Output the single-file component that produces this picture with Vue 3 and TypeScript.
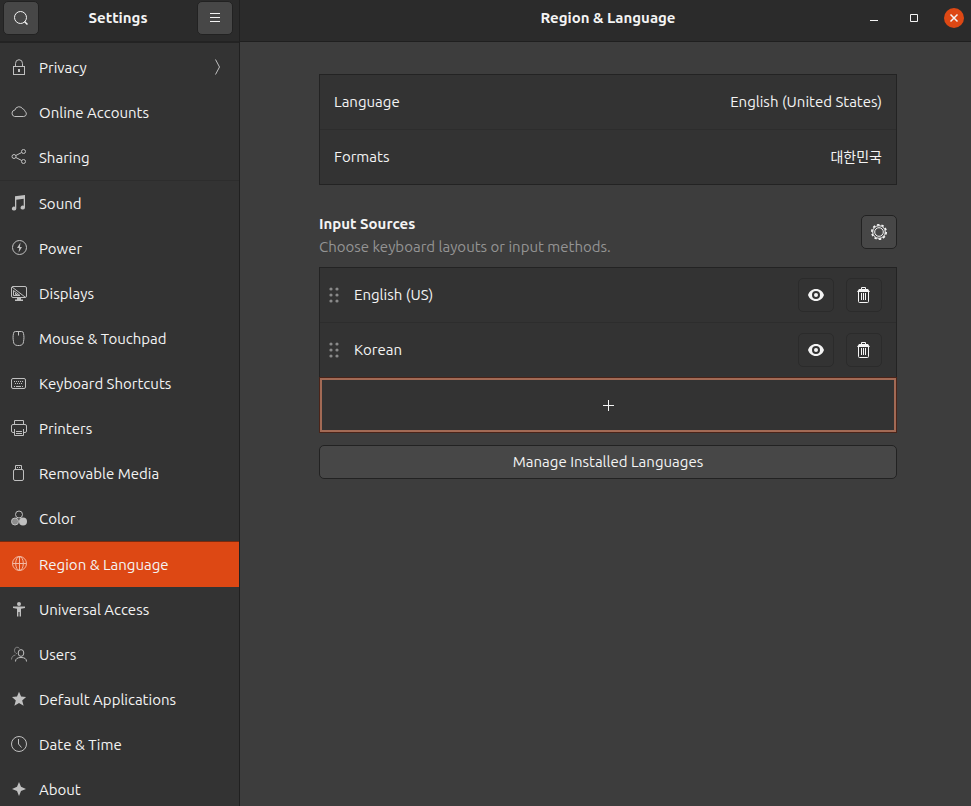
<script setup lang="ts">
import { ref } from 'vue'

interface Panel {
  label: string
  icon: string
  arrow?: boolean
  groupStart?: boolean
}

const panels: Panel[] = [
  {
    label: 'Privacy',
    arrow: true,
    icon: '<rect x="2.5" y="7.5" width="11" height="8"/><path d="M4.5 7.5V4.6a3.5 3.9 0 0 1 7 0v2.9"/><rect class="solid" x="7" y="10" width="2" height="3"/>',
  },
  {
    label: 'Online Accounts',
    icon: '<path d="M3.6 12.5h9.1a2.8 2.8 0 0 0 .9-5.4c.3-1-.6-2-1.600-1.800A4.300 4.300 0 0 0 3.900 6A3.300 3.300 0 0 0 3.600 12.500z"/>',
  },
  {
    label: 'Sharing',
    icon: '<circle cx="3" cy="7.500" r="2"/><circle cx="12.500" cy="2.500" r="2"/><circle cx="12.500" cy="12.500" r="2"/><path d="M4.800 6.500L10.700 3.500M4.800 8.500L10.700 11.500"/>',
  },
  {
    label: 'Sound',
    groupStart: true,
    icon: '<path class="solid" d="M4 1.200L14 0v12.500a2.200 2 0 1 1-1.300-1.800V3.800L5.300 4.700v8.800a2.200 2 0 1 1-1.300-1.800z"/>',
  },
  {
    label: 'Power',
    icon: '<circle cx="8.500" cy="7.500" r="7"/><path class="solid" d="M9.500 2.500L6 8h2.200L7.600 12.500L11 7H8.900z"/>',
  },
  {
    label: 'Displays',
    icon: '<rect x=".5" y="1.500" width="15" height="11" rx="1.500"/><path d="M1 2l13 10M2.500 5.500v5h6.500zM4.500 8v1.500h2"/><path class="solid" d="M6 13h4v1.500h2V16H4v-1.500h2z"/>',
  },
  {
    label: 'Mouse & Touchpad',
    icon: '<path d="M4.500 1.500h6a2 2 0 0 1 2 2c.6 3 .6 5 0 8a4.500 4 0 0 1-4 4h-2a4.500 4 0 0 1-4-4c-.6-3-.6-5 0-8a2 2 0 0 1 2-2zM7.500 1.500v4"/>',
  },
  {
    label: 'Keyboard Shortcuts',
    icon: '<rect x=".5" y="3.500" width="14" height="10" rx="1.500"/><path stroke-dasharray="1 1" d="M3 6.500h10M4 8.500h8"/><path d="M3 11.500h1M5 11.500h5M11 11.500h1"/>',
  },
  {
    label: 'Printers',
    icon: '<path d="M3.500 4V.5h9V4M3 12.500H2A1.500 1.500 0 0 1 .5 11V6A1.500 1.500 0 0 1 2 4.500h12A1.500 1.500 0 0 1 15.500 6v5a1.500 1.500 0 0 1-1.500 1.500h-1M3.500 9v6.500h9V9M5 11.500h6M5 13.500h6"/>',
  },
  {
    label: 'Removable Media',
    icon: '<rect x="2.500" y="4.500" width="10" height="11" rx="1.500"/><path d="M4.500 4V.5h6V4M6 2.500h1M8 2.500h1"/>',
  },
  {
    label: 'Color',
    icon: '<circle cx="8" cy="4.500" r="3.500"/><circle cx="4" cy="11.500" r="3.500" fill="#8d8d8d"/><circle class="solid" cx="12" cy="11.500" r="4"/>',
  },
  {
    label: 'Region & Language',
    groupStart: true,
    icon: '<circle cx="8.500" cy="7.500" r="7"/><ellipse cx="8.500" cy="7.500" rx="3.800" ry="7"/><path d="M1.500 7.500h14M8.500.5v14"/>',
  },
  {
    label: 'Universal Access',
    icon: '<circle class="solid" cx="8" cy="3" r="2"/><path class="solid" d="M2 5.500h12V7l-4 .8V15.500H8.600V11H7.400v4.500H6V7.800L2 7z"/>',
  },
  {
    label: 'Users',
    icon: '<g opacity=".55"><path d="M6 7.800C4.500 7.300 3.500 6 3.500 4.300a2.700 2.900 0 0 1 5-1.700M.5 13.500c0-2.500 1.500-4 4-4.500"/></g><ellipse cx="10" cy="7" rx="2.800" ry="3.400"/><path d="M4.500 15.500c0-2.800 2-4 5.500-4s5.500 1.200 5.500 4"/>',
  },
  {
    label: 'Default Applications',
    icon: '<path class="solid" d="M8 .8l2.100 4.800 5 .4-3.900 3.400 1.400 5.400L8 11.900l-4.600 2.900 1.400-5.400L1 6l5-.4z"/>',
  },
  {
    label: 'Date & Time',
    icon: '<circle cx="8" cy="8" r="7.500"/><path d="M7.500 3v5l3 3.500"/>',
  },
  {
    label: 'About',
    icon: '<path class="solid" d="M8 1l2 4.800L15 8l-5 2L8 15l-2-5L1 8l5-2.200z"/>',
  },
]

const selected = ref('Region & Language')
const sources = ref<string[]>(['English (US)', 'Korean'])
const locale = [
  { label: 'Language', value: 'English (United States)', lang: 'en' },
  { label: 'Formats', value: '대한민국', lang: 'ko' },
]

function remove(index: number) {
  sources.value.splice(index, 1)
}
</script>

<template>
  <div class="window">
    <aside class="sidebar">
      <header class="bar side-bar">
        <button class="btn tool" type="button" aria-label="Search">
          <svg class="icon bright" viewBox="0 0 16 16"><circle cx="7.500" cy="7.500" r="6" /><path d="M11.500 11.500L14.500 14.500" stroke-width="1.500" /></svg>
        </button>
        <h1 class="title">Settings</h1>
        <button class="btn tool" type="button" aria-label="Menu">
          <svg class="icon bright" viewBox="0 0 16 16"><path d="M3 3.500h10M3 7.500h10M3 11.500h10" /></svg>
        </button>
      </header>
      <nav class="nav">
        <a
          v-for="p in panels"
          :key="p.label"
          href="#"
          class="nav-item"
          :class="{ active: p.label === selected, group: p.groupStart }"
          @click.prevent="selected = p.label"
        >
          <svg class="icon" viewBox="0 0 16 16" v-html="p.icon"></svg>
          <span class="grow">{{ p.label }}</span>
          <svg v-if="p.arrow" class="icon" viewBox="0 0 16 16"><path d="M5.500 .5L9.500 8L5.500 15.500" /></svg>
        </a>
      </nav>
    </aside>

    <section class="content">
      <header class="bar main-bar">
        <h2 class="title">{{ selected }}</h2>
        <div class="controls">
          <button class="ctl" type="button" aria-label="Minimize">
            <svg class="icon bright" viewBox="0 0 16 16"><path d="M4 10.500h8" /></svg>
          </button>
          <button class="ctl" type="button" aria-label="Maximize">
            <svg class="icon bright" viewBox="0 0 16 16"><path d="M4.500 4.500h7v7h-7z" /></svg>
          </button>
          <button class="ctl close" type="button" aria-label="Close">
            <svg class="icon bright" viewBox="0 0 16 16"><path d="M4.500 4.500l7 7M11.500 4.500l-7 7" stroke-width="1.500" /></svg>
          </button>
        </div>
      </header>

      <main class="page">
        <div class="list">
          <button v-for="l in locale" :key="l.label" class="row locale" type="button">
            <span class="grow">{{ l.label }}</span>
            <span :lang="l.lang">{{ l.value }}</span>
          </button>
        </div>

        <div class="section-head">
          <div class="grow">
            <h3 class="heading">Input Sources</h3>
            <p class="hint">Choose keyboard layouts or input methods.</p>
          </div>
          <button class="btn square" type="button" aria-label="Input source options">
            <svg class="icon bright" viewBox="0 0 16 16"><circle cx="8" cy="8" r="7.200" stroke-width="1.600" stroke-dasharray="2.500 2.024" /><circle cx="8" cy="8" r="6.300" /><circle cx="8" cy="8" r="4.300" /></svg>
          </button>
        </div>

        <div class="list">
          <div v-for="(s, i) in sources" :key="s" class="row source">
            <svg class="grip" viewBox="0 0 10 16">
              <circle v-for="n in 6" :key="n" :cx="n % 2 ? 2 : 8" :cy="2 + 6 * Math.floor((n - 1) / 2)" r="1.600" />
            </svg>
            <span class="grow">{{ s }}</span>
            <button class="btn square flat" type="button" :aria-label="'Preview ' + s">
              <svg class="icon bright" viewBox="0 0 16 16"><path class="solid" fill-rule="evenodd" d="M8 2C4 2 1.300 4.500 0 8c1.300 3.500 4 6 8 6s6.700-2.500 8-6c-1.300-3.500-4-6-8-6zm0 2a4 4 0 1 1 0 8 4 4 0 0 1 0-8z" /><circle class="solid" cx="8" cy="8" r="2" /></svg>
            </button>
            <button class="btn square flat" type="button" :aria-label="'Remove ' + s" @click="remove(i)">
              <svg class="icon bright" viewBox="0 0 16 16"><path d="M5.500 2.500v-2h4v2M2.500 5v9.500a1 1 0 0 0 1 1h8a1 1 0 0 0 1-1V5M5.500 6v7M7.500 6v7M9.500 6v7" /><path class="solid" d="M3 2h9l2 3H1z" /></svg>
            </button>
          </div>
          <button class="row add" type="button" aria-label="Add input source">
            <svg class="icon bright" viewBox="0 0 16 16"><path d="M8.500 3v11M3 8.500h11" /></svg>
          </button>
        </div>

        <button class="btn manage" type="button">Manage Installed Languages</button>
      </main>
    </section>
  </div>
</template>

<style>
body {
  margin: 0;
  background: #3d3d3d;
}
</style>

<style scoped>
.window {
  display: flex;
  height: 100vh;
  overflow: hidden;
  background: #3d3d3d;
  color: #f4f4f4;
  font: 15px/20px Ubuntu, "Noto Sans", "Noto Sans CJK KR", sans-serif;
}
.window *,
.window {
  box-sizing: border-box;
}
h1, h2, h3, p {
  margin: 0;
}
button {
  font: inherit;
  color: inherit;
  padding: 0;
}
.grow {
  flex: 1;
}
.sidebar {
  flex: none;
  display: flex;
  flex-direction: column;
  width: 240px;
  border-right: 1px solid #202020;
  background: #333333;
}
.bar {
  flex: none;
  display: flex;
  background: #2b2b2b;
  border-bottom: 1px solid #1f1f1f;
}
.side-bar {
  height: 43px;
  justify-content: space-between;
  padding: 1px 6px 0 3px;
  border-bottom: 2px solid #232323;
}
.title {
  font-size: 15px;
  line-height: 34px;
  font-weight: 700;
}
.main-bar {
  display: grid;
  grid-template-columns: 1fr auto 1fr;
  height: 42px;
  padding: 1px 7px 0 12px;
}
.main-bar .title {
  grid-column: 2;
}
.controls {
  display: flex;
  justify-content: flex-end;
  align-items: center;
  gap: 20px;
  height: 34px;
}
.ctl {
  display: flex;
  align-items: center;
  justify-content: center;
  width: 20px;
  height: 20px;
  border: 0;
  border-radius: 50%;
  background: none;
}
.ctl.close {
  background: #dd4814;
}
.btn {
  display: flex;
  align-items: center;
  justify-content: center;
  height: 34px;
  border: 1px solid #222222;
  border-radius: 5px;
  background: #474747;
}
.square,
.tool {
  flex: none;
  width: 36px;
}
.flat {
  border-color: #2b2b2b;
  background: #333333;
}
.icon {
  flex: none;
  width: 16px;
  height: 16px;
  fill: none;
  stroke: #c0c0c0;
  overflow: visible;
}
.icon :deep(.solid) {
  fill: #c0c0c0;
  stroke: none;
}
.icon.bright {
  stroke: #f4f4f4;
}
.icon.bright .solid {
  fill: #f4f4f4;
}
.nav {
  flex: 1;
  min-height: 0;
  overflow: hidden;
  padding-top: 2px;
}
.nav-item {
  display: flex;
  align-items: center;
  gap: 12px;
  height: 45px;
  padding: 0 13px 1px 11px;
  color: inherit;
  text-decoration: none;
}
.nav-item .grow {
  padding-top: 2px;
}
.nav-item.group {
  height: 46px;
  border-top: 1px solid #2d2d2d;
}
.nav-item.active {
  border-top-color: #7a2a0e;
  background: #dd4814;
}
.nav-item.active .icon {
  stroke: #f3b9a3;
}
.content {
  flex: 1;
  min-width: 0;
}
.page {
  padding: 32px 74px 32px 79px;
}
.list {
  border: 1px solid #232323;
  background: #333333;
}
.row {
  display: flex;
  align-items: center;
  width: 100%;
  height: 55px;
  border: 0;
  border-bottom: 1px solid #2d2d2d;
  background: none;
  text-align: left;
}
.row:last-child {
  border-bottom: 0;
}
.locale {
  padding: 0 14px;
}
.locale:last-child {
  height: 54px;
}
.locale :lang(ko) {
  font-size: 14px;
}
.source {
  gap: 12px;
  padding: 0 14px 0 9px;
}
.source .grip {
  margin-right: 3px;
}
.grip {
  width: 10px;
  height: 16px;
  fill: #8a8a8a;
}
.row.add {
  justify-content: center;
  height: 54px;
  border: 2px solid #a26a55;
  outline: 1px solid #4a2419;
}
.section-head {
  display: flex;
  align-items: flex-start;
  height: 43px;
  margin: 29px 0 10px;
}
.section-head .btn {
  margin-top: 1px;
}
.heading {
  font-size: 15px;
  line-height: 20px;
}
.hint {
  margin-top: 3px;
  line-height: 20px;
  color: #949494;
}
.manage {
  width: 100%;
  margin-top: 12px;
}
</style>
